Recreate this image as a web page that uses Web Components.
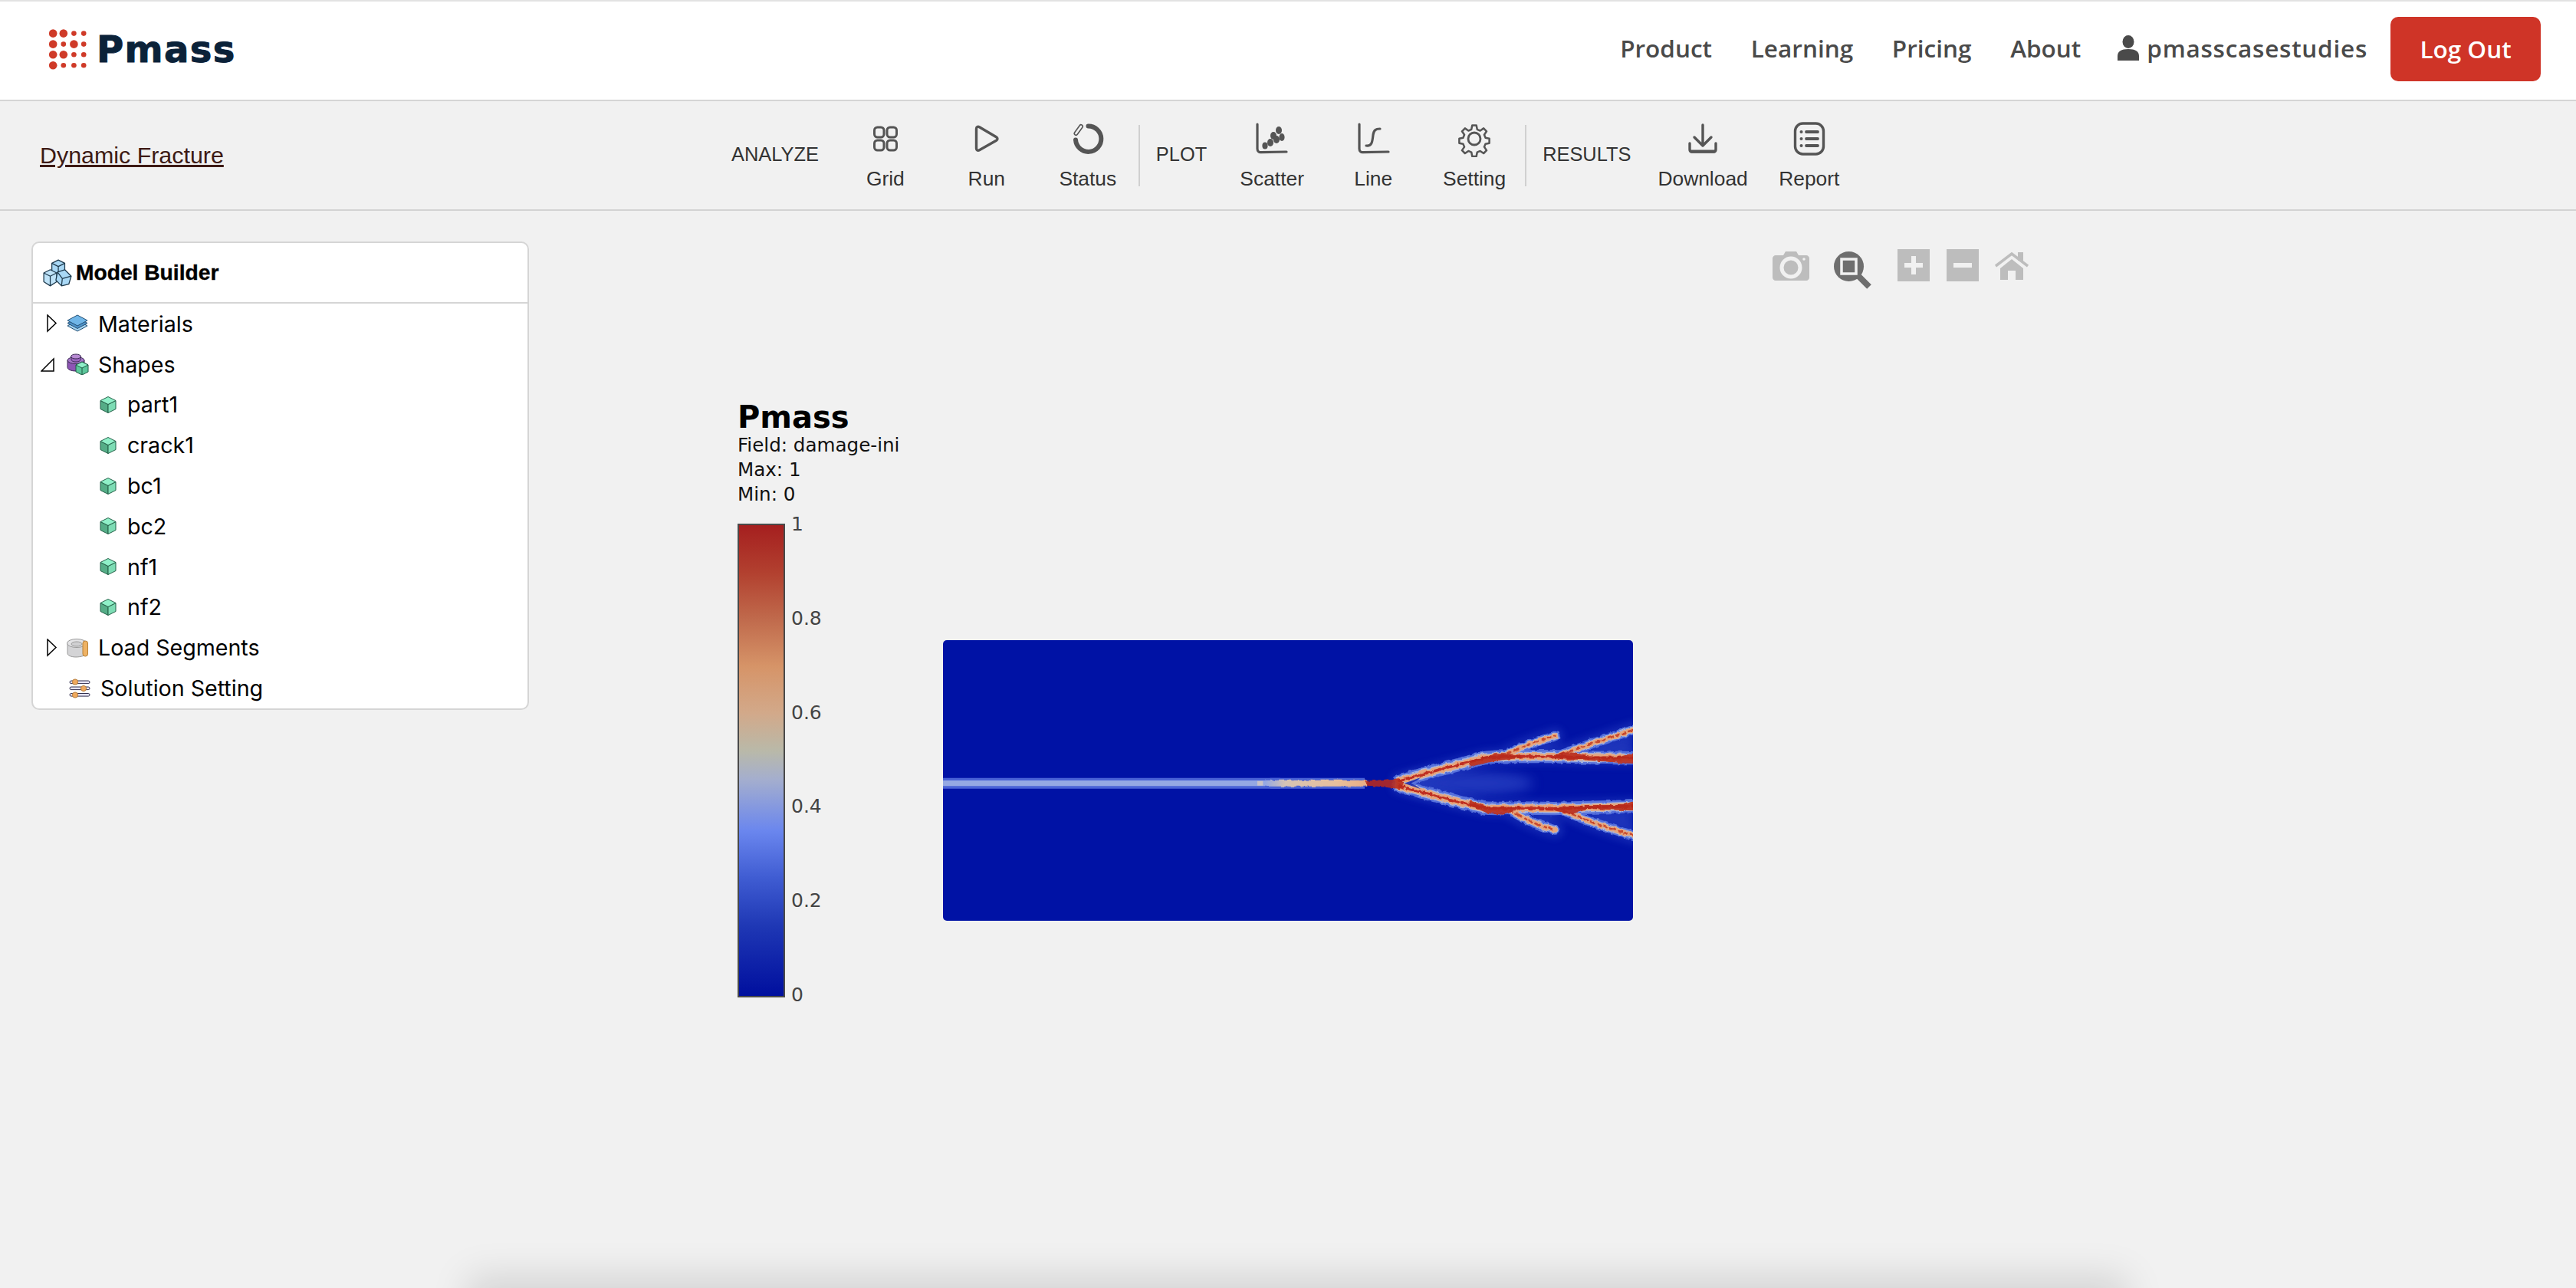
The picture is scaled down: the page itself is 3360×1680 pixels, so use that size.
<!DOCTYPE html>
<html lang="en">
<head>
<meta charset="utf-8">
<title>Pmass</title>
<style>
  html, body { margin: 0; height: 100%; overflow: hidden; background: #f1f1f1; }
</style>
</head>
<body>
<pm-app>
  <pm-header slot="header">
    <pm-logo slot="logo"></pm-logo>
    <nav-link>Product</nav-link>
    <nav-link>Learning</nav-link>
    <nav-link>Pricing</nav-link>
    <nav-link class="last">About</nav-link>
    <nav-link class="user">
      <svg slot="icon" width="28" height="34" viewBox="0 0 28 34"><ellipse cx="14" cy="8.500" rx="7.500" ry="8.500" fill="#4a4a4a"/><path d="M0 33v-6c0-6 5-9 14-9s14 3 14 9v6z" fill="#4a4a4a"/></svg>
      pmasscasestudies
    </nav-link>
    <logout-button>Log Out</logout-button>
  </pm-header>

  <pm-toolbar slot="toolbar">
    <a slot="title" href="#">Dynamic Fracture</a>
    <tool-label>ANALYZE</tool-label>
    <tool-item label="Grid">
      <svg width="48" height="48" viewBox="0 0 48 48" fill="none" stroke="#555" stroke-width="3"><rect x="9.500" y="9" width="12.500" height="13" rx="4"/><rect x="26" y="9" width="12.500" height="13" rx="4"/><rect x="9.500" y="26" width="12.500" height="13" rx="4"/><rect x="26" y="26" width="12.500" height="13" rx="4"/></svg>
    </tool-item>
    <tool-item label="Run">
      <svg width="48" height="48" viewBox="0 0 48 48" fill="none" stroke="#555" stroke-width="3.400" stroke-linejoin="round"><path d="M10.500 11c0-2.500 2-3.500 4-2.300l22 13c2 1.200 2 3.400 0 4.600l-22 12.500c-2 1.100-4 .2-4-2.300z"/></svg>
    </tool-item>
    <tool-item label="Status">
      <svg width="48" height="48" viewBox="0 0 48 48" fill="none"><path d="M24.500 7.500a16.700 16.700 0 1 1-16.500 18" stroke="#555" stroke-width="6" stroke-linecap="round"/><path d="M8.500 17l6.500-9" stroke="#555" stroke-width="6" stroke-linecap="round"/><path d="M8.500 17l6.500-9" stroke="#f1f1f1" stroke-width="2.800" stroke-linecap="round"/></svg>
    </tool-item>
    <tool-sep></tool-sep>
    <tool-label class="tight">PLOT</tool-label>
    <tool-item label="Scatter">
      <svg width="48" height="48" viewBox="0 0 48 48" fill="none"><path d="M5 5v32c0 3 2 5 5 4.600l33-.6" stroke="#555" stroke-width="3.200" stroke-linecap="round"/><g fill="#555"><ellipse cx="33" cy="13" rx="4" ry="5"/><ellipse cx="26" cy="20" rx="4" ry="5"/><ellipse cx="37" cy="22" rx="3.600" ry="5"/><ellipse cx="30" cy="25" rx="4" ry="5"/><ellipse cx="22" cy="29" rx="4" ry="5"/><ellipse cx="15" cy="33" rx="3.600" ry="4.500"/></g></svg>
    </tool-item>
    <tool-item label="Line">
      <svg width="48" height="48" viewBox="0 0 48 48" fill="none" stroke="#555" stroke-width="3.200" stroke-linecap="round"><path d="M6 5v32c0 3 2 5 5 4.600l33-.6"/><path d="M15 33c8 1 8-6 9-14 1-6 3-8 9-8"/></svg>
    </tool-item>
    <tool-item label="Setting">
      <svg width="48" height="48" viewBox="0 0 48 48" fill="none" stroke="#555" stroke-width="2.800" stroke-linejoin="round"><circle cx="24" cy="24" r="8"/><path d="M21 4.500h6l1.200 6 4.300 1.800 5-3.400 4.300 4.300-3.400 5 1.800 4.300 5.600 1.200v6.600l-5.600 1.200-1.800 4.300 3.400 5-4.300 4.300-5-3.400-4.300 1.800-1.200 6h-6l-1.200-6-4.300-1.800-5 3.400-4.300-4.300 3.400-5-1.800-4.300-5.600-1.200v-6.600l5.600-1.200 1.800-4.300-3.400-5 4.300-4.300 5 3.400 4.300-1.800z" transform="translate(24 24) scale(.9) translate(-24 -24)"/></svg>
    </tool-item>
    <tool-sep></tool-sep>
    <tool-label>RESULTS</tool-label>
    <tool-item label="Download">
      <svg width="48" height="48" viewBox="0 0 48 48" fill="none" stroke="#555" stroke-width="3.400" stroke-linecap="round" stroke-linejoin="round"><path d="M24 6v26M13 22l11 11 11-11"/><path d="M7 30v8c0 2 1 3 3 3h28c2 0 3-1 3-3v-8"/><path d="M9 40.500h30" stroke-width="4"/></svg>
    </tool-item>
    <tool-item label="Report">
      <svg width="48" height="48" viewBox="0 0 48 48" fill="none" stroke="#555" stroke-width="3.400" stroke-linecap="round"><rect x="5.500" y="4" width="37" height="40" rx="10"/><path d="M20 15h15M20 24h15M20 33h15" stroke-width="3.800"/><path d="M13.500 15h.1M13.500 24h.1M13.500 33h.1" stroke-width="4"/></svg>
    </tool-item>
  </pm-toolbar>

  <tree-panel slot="side" heading="Model Builder">
    <svg slot="icon" width="40" height="38" viewBox="0 0 38 36" stroke="#1f3a4d" stroke-width="1.200" stroke-linejoin="round"><g><path d="M12 6l8-4 8 4v11l-8 4-8-4z" fill="#a9d8f5"/><path d="M12 6l8 4 8-4M20 10v10" fill="none"/></g><g><path d="M2 18l8-4 8 4v11l-8 5-8-5z" fill="#bfe3f8"/><path d="M2 18l8 4 8-4M10 22v12" fill="none"/></g><g><path d="M19 17l9-3 8 8-3 10-9 2-7-7z" fill="#a9d8f5"/><path d="M19 17l6 8 11-3M25 25l-1 9" fill="none"/></g></svg>
    <tree-row>
      <tree-toggle slot="toggle"></tree-toggle>
      <svg slot="icon" width="30" height="24" viewBox="0 0 30 24" stroke="#234f74" stroke-width="1" stroke-linejoin="round"><path d="M2 15l13-7 13 7-13 7z" fill="#a4d3f0"/><path d="M2 11.500l13-7 13 7-13 7z" fill="#4f93c9"/><path d="M2 8l13-7 13 7-13 7z" fill="#70b6e8"/></svg>
      Materials
    </tree-row>
    <tree-row>
      <tree-toggle slot="toggle" open></tree-toggle>
      <svg slot="icon" width="30" height="28" viewBox="0 0 30 28" stroke="#3c2a55" stroke-width="1"><path d="M2 9v9c0 3 5 5 11 5s11-2 11-5V9z" fill="#8e55b5"/><ellipse cx="13" cy="9" rx="11" ry="4.500" fill="#a677c8"/><path d="M7 3v5c0 2 3 3 6 3s6-1 6-3V3z" fill="#9a63bf"/><ellipse cx="13" cy="4" rx="6.500" ry="3" fill="#b78ad2"/><path d="M13 15l8-4 8 4v9l-8 4-8-4z" fill="#5cc79b" stroke="#1f5a44"/><path d="M13 15l8 4 8-4-8-4z" fill="#8ff0c8" stroke="#1f5a44"/><path d="M21 19v9" stroke="#1f5a44"/></svg>
      Shapes
    </tree-row>
    <tree-row kind="leaf"><cube-icon slot="icon"></cube-icon>part1</tree-row>
    <tree-row kind="leaf"><cube-icon slot="icon"></cube-icon>crack1</tree-row>
    <tree-row kind="leaf"><cube-icon slot="icon"></cube-icon>bc1</tree-row>
    <tree-row kind="leaf"><cube-icon slot="icon"></cube-icon>bc2</tree-row>
    <tree-row kind="leaf"><cube-icon slot="icon"></cube-icon>nf1</tree-row>
    <tree-row kind="leaf"><cube-icon slot="icon"></cube-icon>nf2</tree-row>
    <tree-row>
      <tree-toggle slot="toggle"></tree-toggle>
      <svg slot="icon" width="30" height="26" viewBox="0 0 30 26" stroke="#9a9a9a" stroke-width="1"><path d="M2 7v13c0 3 5 5 11 5s14-2 14-5V7z" fill="#d4d4d6"/><ellipse cx="14" cy="7" rx="12.500" ry="5.500" fill="#e4e4e6"/><ellipse cx="14" cy="8" rx="7" ry="3" fill="#d0d0d2"/><rect x="22" y="4" width="6.500" height="20" rx="3" fill="#eeb264" stroke="#b98238"/></svg>
      Load Segments
    </tree-row>
    <tree-row kind="plain">
      <svg slot="icon" width="28" height="26" viewBox="0 0 28 26" stroke="#33304f" stroke-width="1"><g fill="#e4e2f3"><rect x="1" y="3" width="26" height="3.600" rx="1.800"/><rect x="1" y="11" width="26" height="3.600" rx="1.800"/><rect x="1" y="19.500" width="26" height="3.600" rx="1.800"/></g><g fill="#efa95e" stroke="#b77c39"><circle cx="8" cy="4.500" r="3.600"/><circle cx="19" cy="13" r="3.600"/><circle cx="8" cy="21.500" r="3.600"/></g></svg>
      Solution Setting
    </tree-row>
  </tree-panel>

  <plot-view slot="main">
    <plot-modebar slot="modebar"></plot-modebar>
    <plot-legend slot="legend" heading="Pmass">
      <span>Field: damage-ini</span>
      <span>Max: 1</span>
      <span>Min: 0</span>
    </plot-legend>
    <crack-field slot="field"></crack-field>
  </plot-view>
</pm-app>

<script>
class PmApp extends HTMLElement {
  constructor() {
    super();
    this.attachShadow({ mode: "open" });
    this.shadowRoot.innerHTML = `
      <style>
        :host { display: flex; flex-direction: column; position: relative; height: 100vh; overflow: hidden; background: #f1f1f1; }
        .body { flex: 1; display: flex; align-items: flex-start; padding: 40px 0 0 41px; }
        .shade { position: absolute; left: 625px; right: 600px; top: 100%; height: 40px; box-shadow: 0 0 50px 14px rgba(0,0,0,.13); }
      </style>
      <slot name="header"></slot>
      <slot name="toolbar"></slot>
      <div class="body"><slot name="side"></slot><slot name="main"></slot></div>
      <div class="shade"></div>`;
  }
}

class PmHeader extends HTMLElement {
  constructor() {
    super();
    this.attachShadow({ mode: "open" });
    this.shadowRoot.innerHTML = `
      <style>
        :host { display: flex; align-items: center; box-sizing: border-box; height: 132px; padding: 0 46px 4px 64px; background: #fff; border-top: 2px solid #e2e2e2; border-bottom: 2px solid #d5d5d5; }
        .right { margin-left: auto; display: flex; align-items: center; }
      </style>
      <slot name="logo"></slot>
      <div class="right"><slot></slot></div>`;
  }
}

class PmLogo extends HTMLElement {
  constructor() {
    super();
    this.attachShadow({ mode: "open" });
    const big = [[1,1,0,0],[1,0,1,0],[1,1,0,0],[1,0,0,0]];
    const xs = [5.2, 18.8, 32.4, 45.2], ys = [5.6, 19.6, 33.2, 47.2];
    let dots = "";
    big.forEach((row, r) => row.forEach((b, c) => {
      dots += `<circle cx="${xs[c]}" cy="${ys[r]}" r="${b ? 5.3 : 3.3}"/>`;
    }));
    this.shadowRoot.innerHTML = `
      <style>
        :host { display: flex; align-items: center; gap: 12px; }
        svg { display: block; }
        span { font: 700 48px/1 "DejaVu Sans", sans-serif; color: #0b2239; letter-spacing: 1.4px; -webkit-text-stroke: 1px #0b2239; }
      </style>
      <svg width="50" height="53" viewBox="0 0 50 53" fill="#cf3a28">${dots}</svg>
      <span>Pmass</span>`;
  }
}

class NavLink extends HTMLElement {
  constructor() {
    super();
    this.attachShadow({ mode: "open" });
    this.shadowRoot.innerHTML = `
      <style>
        :host { display: flex; align-items: center; gap: 10px; margin: 0 50.7px 2px 0; font: 600 31.5px/1 "Open Sans", sans-serif; color: #4a4a4a; white-space: nowrap; }
        :host(.last) { margin-right: 48px; }
        :host(.user) { margin-right: 30px; letter-spacing: .75px; }
      </style>
      <slot name="icon"></slot><slot></slot>`;
  }
}

class LogoutButton extends HTMLElement {
  constructor() {
    super();
    this.attachShadow({ mode: "open" });
    this.shadowRoot.innerHTML = `
      <style>
        :host { display: flex; align-items: center; justify-content: center; width: 196px; height: 84px; background: #cf3427; border-radius: 10px; color: #fff; font: 600 31.5px/1 "Open Sans", sans-serif; }
      </style>
      <slot></slot>`;
  }
}

class PmToolbar extends HTMLElement {
  constructor() {
    super();
    this.attachShadow({ mode: "open" });
    this.shadowRoot.innerHTML = `
      <style>
        :host { display: grid; grid-template-columns: 933px auto; align-items: center; box-sizing: border-box; height: 143px; border-bottom: 2px solid #d3d3d3; }
        .title { padding-left: 52px; }
        ::slotted(a) { font: 30.4px "Liberation Sans", sans-serif; color: #3d1a14; }
        .tools { display: flex; align-items: center; }
      </style>
      <div class="title"><slot name="title"></slot></div>
      <div class="tools"><slot></slot></div>`;
  }
}

class ToolLabel extends HTMLElement {
  constructor() {
    super();
    this.attachShadow({ mode: "open" });
    this.shadowRoot.innerHTML = `
      <style>
        :host { display: block; padding: 0 21px 2px; font: 25.4px "Liberation Sans", sans-serif; color: #333; }
        :host(.tight) { padding-right: 19px; }
      </style>
      <slot></slot>`;
  }
}

class ToolItem extends HTMLElement {
  constructor() {
    super();
    this.attachShadow({ mode: "open" });
  }

  connectedCallback() {
    this.shadowRoot.innerHTML = `
      <style>
        :host { display: flex; flex-direction: column; align-items: center; gap: 12px; box-sizing: border-box; min-width: 132px; padding: 0 14px; font: 26.4px/32px "Liberation Sans", sans-serif; color: #333; }
        .icon { height: 48px; }
        ::slotted(svg) { display: block; }
      </style>
      <div class="icon"><slot></slot></div>
      <span>${this.getAttribute("label")}</span>`;
  }
}

class ToolSep extends HTMLElement {
  constructor() {
    super();
    this.attachShadow({ mode: "open" });
    this.shadowRoot.innerHTML = `<style>:host { display: block; width: 2px; height: 80px; background: #d0d0d0; }</style>`;
  }
}

class TreePanel extends HTMLElement {
  constructor() {
    super();
    this.attachShadow({ mode: "open" });
  }

  connectedCallback() {
    this.shadowRoot.innerHTML = `
      <style>
        :host { display: block; box-sizing: border-box; width: 649px; flex: none; background: #fff; border: 2px solid #d5d5d5; border-radius: 10px; }
        header { display: flex; align-items: center; gap: 4px; box-sizing: border-box; height: 79px; padding: 0 0 0 12px; border-bottom: 2px solid #d5d5d5; font: 700 28.2px "Liberation Sans", sans-serif; color: #000; -webkit-text-stroke: .4px #000; }
        ::slotted(svg) { display: block; }
      </style>
      <header><slot name="icon"></slot><span>${this.getAttribute("heading")}</span></header>
      <slot></slot>`;
  }
}

class TreeRow extends HTMLElement {
  constructor() {
    super();
    this.attachShadow({ mode: "open" });
    this.shadowRoot.innerHTML = `
      <style>
        :host { display: flex; align-items: center; box-sizing: border-box; height: 52.8px; padding-left: 10px; font: 28.6px "Inter", sans-serif; color: #000; }
        :host([kind="leaf"]) { padding-left: 87px; }
        :host([kind="plain"]) { padding-left: 47px; }
        .icon { display: flex; align-items: center; margin-right: 12px; }
        :host([kind="leaf"]) .icon { margin-right: 14px; }
        :host([kind="plain"]) .icon { margin-right: 13px; }
        ::slotted(svg), ::slotted(cube-icon) { display: block; }
      </style>
      <slot name="toggle"></slot>
      <div class="icon"><slot name="icon"></slot></div>
      <slot></slot>`;
  }
}

class TreeToggle extends HTMLElement {
  constructor() {
    super();
    this.attachShadow({ mode: "open" });
  }

  connectedCallback() {
    const shape = this.hasAttribute("open") ? "M1 21L17 5v16z" : "M9 1l11 10.500L9 22z";
    this.shadowRoot.innerHTML = `
      <style>:host { display: block; width: 33px; } svg { display: block; }</style>
      <svg width="24" height="24" viewBox="0 0 24 24" fill="none" stroke="#000" stroke-width="1.500"><path d="${shape}"/></svg>`;
  }
}

class CubeIcon extends HTMLElement {
  constructor() {
    super();
    this.attachShadow({ mode: "open" });
    this.shadowRoot.innerHTML = `
      <style>:host { display: block; width: 22px; height: 22px; } svg { display: block; }</style>
      <svg width="22" height="22" viewBox="0 0 22 22" stroke="#256148" stroke-width="1" stroke-linejoin="round"><path d="M1 5.500v11l10 5v-11z" fill="#55ad87"/><path d="M21 5.500v11l-10 5v-11z" fill="#7ddcb4"/><path d="M1 5.500l10-5 10 5-10 5z" fill="#8ff0c8"/></svg>`;
  }
}

class PlotView extends HTMLElement {
  constructor() {
    super();
    this.attachShadow({ mode: "open" });
    this.shadowRoot.innerHTML = `
      <style>
        :host { display: flex; position: relative; flex: 1; align-items: flex-start; padding: 206px 0 0 272px; }
        .field { margin: 314px 0 0 0; }
      </style>
      <slot name="modebar"></slot>
      <slot name="legend"></slot>
      <div class="field"><slot name="field"></slot></div>`;
  }
}

class PlotModebar extends HTMLElement {
  constructor() {
    super();
    this.attachShadow({ mode: "open" });
    this.shadowRoot.innerHTML = `
      <style>
        :host { position: absolute; left: 1622px; top: 10px; display: flex; align-items: flex-start; }
        svg { display: block; }
      </style>
      <svg width="48" height="40" viewBox="0 0 48 40" style="margin-top:2px"><path d="M4 6h10l3-5h14l3 5h10c2 0 4 2 4 4v25c0 2-2 4-4 4H4c-2 0-4-2-4-4V10c0-2 2-4 4-4z" fill="#bdbdbd"/><circle cx="24" cy="22" r="12" fill="none" stroke="#f1f1f1" stroke-width="5"/><circle cx="41" cy="11" r="1.800" fill="#f1f1f1"/></svg>
      <svg width="50" height="50" viewBox="0 0 50 50" style="margin:3px 0 0 32px"><path d="M31 31l15 15" stroke="#6e6e6e" stroke-width="8"/><circle cx="19.500" cy="19.500" r="19.500" fill="#6e6e6e"/><rect x="10" y="10" width="19" height="19" fill="none" stroke="#f1f1f1" stroke-width="3.500"/></svg>
      <svg width="42" height="42" viewBox="0 0 42 42" style="margin-left:33px"><rect width="42" height="42" fill="#bdbdbd"/><path d="M21 9v24M9 21h24" stroke="#f1f1f1" stroke-width="6"/></svg>
      <svg width="42" height="42" viewBox="0 0 42 42" style="margin-left:22px"><rect width="42" height="42" fill="#bdbdbd"/><path d="M9 21h24" stroke="#f1f1f1" stroke-width="6"/></svg>
      <svg width="44" height="37" viewBox="0 0 44 37" style="margin:3px 0 0 21px"><rect x="30" y="1" width="7" height="11" fill="#bdbdbd"/><path d="M7 22L22 10l15 12v15H27V25H17v12H7z" fill="#bdbdbd"/><path d="M1 19L22 3l21 16" fill="none" stroke="#bdbdbd" stroke-width="3.500"/></svg>`;
  }
}

class PlotLegend extends HTMLElement {
  constructor() {
    super();
    this.attachShadow({ mode: "open" });
  }

  connectedCallback() {
    const ticks = ["1", "0.8", "0.6", "0.4", "0.2", "0"].map(t => `<span>${t}</span>`).join("");
    this.shadowRoot.innerHTML = `
      <style>
        :host { display: block; width: 268px; flex: none; font-family: "DejaVu Sans", sans-serif; color: #111; }
        h2 { margin: 0; font: 700 40px/46px "DejaVu Sans", sans-serif; color: #000; }
        .info { display: flex; flex-direction: column; font-size: 24.6px; line-height: 32px; margin-top: -2px; }
        ::slotted(span) { display: block; }
        .scale { display: flex; margin-top: 22px; height: 618px; }
        .bar { box-sizing: border-box; width: 62px; border: 2px solid #4a4a4a; background: linear-gradient(to bottom, #a51f1f 0%, #b2402f 10%, #c06a4c 20%, #d69468 30%, #d2a98a 40%, #b9b9a9 48%, #a4aece 54%, #6a86ee 65%, #3f5cd2 75%, #1f38b5 85%, #000f9e 100%); }
        .ticks { display: flex; flex-direction: column; justify-content: space-between; margin: -14px 0 -12px 8px; font-size: 25px; line-height: 30px; color: #444; }
      </style>
      <h2>${this.getAttribute("heading")}</h2>
      <div class="info"><slot></slot></div>
      <div class="scale"><div class="bar"></div><div class="ticks">${ticks}</div></div>`;
  }
}

class CrackField extends HTMLElement {
  constructor() {
    super();
    this.attachShadow({ mode: "open" });
    // drawn in the coordinates of the 3x crop, so the branches can be read off directly
    const main = [
      "M525 415C620 388 720 362 860 326C900 320 950 320 1000 320L1130 320C1200 322 1250 326 1445 326",
      "M525 435C620 462 720 490 860 522C900 526 950 522 1000 522L1130 524C1200 522 1250 520 1445 515",
    ];
    const branch = [
      "M950 308C1000 285 1060 262 1135 240",
      "M1160 312C1220 290 1320 255 1445 215",
      "M960 532C1010 560 1060 590 1135 607",
      "M1170 532C1240 565 1320 595 1445 630",
    ];
    const paths = list => list.map(d => `<path d="${d}"/>`).join("");
    const mains = paths(main);
    const branches = paths(branch);
    const all = mains + branches;
    // straight strokes have a flat bounding box, so every filter region is in user space
    const region = 'filterUnits="userSpaceOnUse" x="-1400" y="-200" width="3000" height="1300"';
    this.shadowRoot.innerHTML = `
      <style>
        :host { display: block; width: 900px; height: 366px; border-radius: 5px; overflow: hidden; background: #0012a5; }
        svg { display: block; }
      </style>
      <svg width="900" height="366" viewBox="0 0 900 366" fill="none" stroke-linecap="round">
        <defs>
          <filter id="b1" ${region}><feGaussianBlur stdDeviation="2"/></filter>
          <filter id="b3" ${region}><feGaussianBlur stdDeviation="5"/></filter>
          <filter id="b8" ${region}><feGaussianBlur stdDeviation="12"/></filter>
          <filter id="b24" ${region}><feGaussianBlur stdDeviation="22"/></filter>
          <filter id="rough" ${region}>
            <feTurbulence type="fractalNoise" baseFrequency=".05" numOctaves="2" seed="4" result="n"/>
            <feDisplacementMap in="SourceGraphic" in2="n" scale="14" xChannelSelector="R" yChannelSelector="G"/>
            <feGaussianBlur stdDeviation="1"/>
          </filter>
          <linearGradient id="stem" gradientUnits="userSpaceOnUse" x1="0" y1="0" x2="400" y2="0">
            <stop offset="0" stop-color="#95a8e3"/>
            <stop offset=".2" stop-color="#d6c4b4"/>
            <stop offset=".7" stop-color="#e6bf9c"/>
            <stop offset="1" stop-color="#e9ae84"/>
          </linearGradient>
        </defs>
        <g transform="translate(420 45) scale(.33333)">
          <g fill="#3450cc" opacity=".6" filter="url(#b24)">
            <ellipse cx="790" cy="425" rx="260" ry="48"/>
            <path d="M1250 285L1445 235V315H1280z"/>
            <path d="M1250 555L1445 615V535H1280z"/>
            <path d="M1010 300L1170 300L1100 270z"/>
            <path d="M1010 550L1170 550L1100 585z"/>
          </g>
          <g stroke="#2a44c4" stroke-width="70" opacity=".4" filter="url(#b8)">${all}</g>

          <path d="M-1262 425H60" stroke="#4a62d6" stroke-width="42" stroke-linecap="butt" filter="url(#b1)"/>
          <path d="M-1262 425H0" stroke="#95a8e3" stroke-width="22" stroke-linecap="butt"/>
          <path d="M-30 425H20" stroke="#c9c2c8" stroke-width="18" stroke-dasharray="22 28" stroke-linecap="butt"/>
          <path d="M20 425H390" stroke="#4a62d6" stroke-width="42" stroke-linecap="butt" filter="url(#b1)"/>

          <g filter="url(#rough)">
            <path d="M0 425H400" stroke="url(#stem)" stroke-width="24" stroke-linecap="butt"/>
            <g stroke="#5570dc"><g stroke-width="52">${mains}</g><g stroke-width="38">${branches}</g></g>
            <g stroke="#a9b6de"><g stroke-width="36">${mains}</g><g stroke-width="26">${branches}</g></g>
            <g stroke="#e6a57c"><g stroke-width="28">${mains}</g><g stroke-width="20">${branches}</g></g>
            <g stroke="#c8492f" stroke-width="8" stroke-dasharray="12 14 20 16 10 12">${branches}</g>
            <g stroke="#bf2f20" stroke-width="11" stroke-dasharray="20 12 26 10 34 9">${mains}</g>
            <g fill="#b82a1c" opacity=".88">
              <path d="M800 338L900 310L960 310L1000 314L1000 326L930 334L870 344L800 362z"/>
              <path d="M800 492L870 516L930 518L1000 516L1000 528L930 548L870 542L800 510z"/>
              <path d="M1130 312L1200 304L1260 318V332L1180 332L1130 327z"/>
              <path d="M1130 520L1260 514V527L1200 546L1130 532z"/>
              <path d="M1250 320H1390L1445 306V348L1400 346L1250 334z"/>
              <path d="M1250 510H1390L1445 496V532L1390 530L1250 524z"/>
              <path d="M390 417L470 410L525 406L545 425L525 447L470 440L400 434z"/>
            </g>
          </g>
          <path d="M545 425L610 402C595 415 580 420 572 425C580 430 595 435 610 448z" fill="#0a1ea8" opacity=".8" filter="url(#b1)"/>
        </g>
      </svg>`;
  }
}

customElements.define("pm-app", PmApp);
customElements.define("pm-header", PmHeader);
customElements.define("pm-logo", PmLogo);
customElements.define("nav-link", NavLink);
customElements.define("logout-button", LogoutButton);
customElements.define("pm-toolbar", PmToolbar);
customElements.define("tool-label", ToolLabel);
customElements.define("tool-item", ToolItem);
customElements.define("tool-sep", ToolSep);
customElements.define("tree-panel", TreePanel);
customElements.define("tree-row", TreeRow);
customElements.define("tree-toggle", TreeToggle);
customElements.define("cube-icon", CubeIcon);
customElements.define("plot-view", PlotView);
customElements.define("plot-modebar", PlotModebar);
customElements.define("plot-legend", PlotLegend);
customElements.define("crack-field", CrackField);
</script>
</body>
</html>
